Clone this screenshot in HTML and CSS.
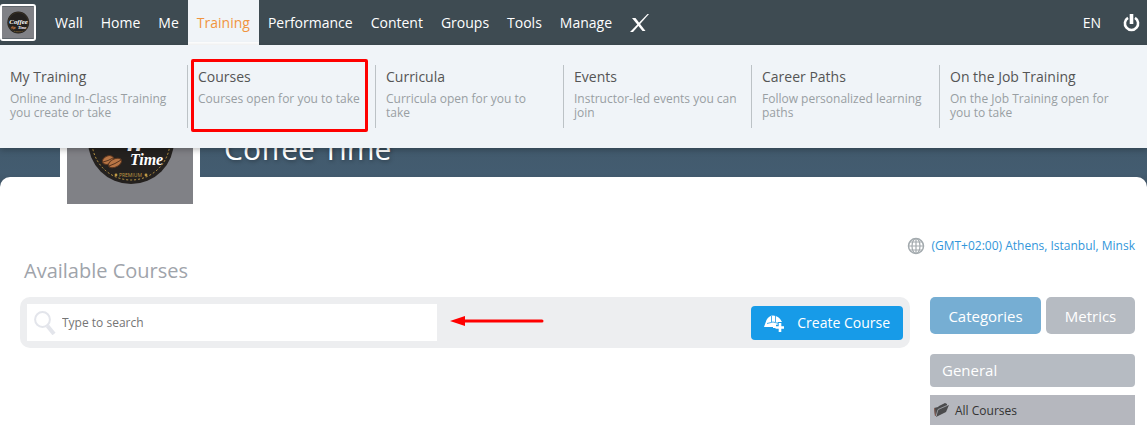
FILE: index.html
```html
<!DOCTYPE html>
<html lang="en">
<head>
<meta charset="utf-8">
<meta name="viewport" content="width=device-width, initial-scale=1">
<title>Available Courses</title>
<link rel="stylesheet" href="styles.css">
</head>
<body>
<svg class="defs" aria-hidden="true">
  <symbol id="coffee-badge" viewBox="0 0 126 126">
    <rect width="126" height="126" fill="#808186"/>
    <circle cx="64" cy="63" r="43" fill="#24211f"/>
    <circle cx="64" cy="63" r="39" fill="none" stroke="#c09a45" stroke-width="1" stroke-dasharray="2 2"/>
    <g fill="#b87545" stroke="#59351f" stroke-width="1">
      <ellipse cx="41" cy="82" rx="6" ry="4" transform="rotate(-25 41 82)"/>
      <ellipse cx="48" cy="85" rx="7" ry="4" transform="rotate(-25 48 85)"/>
      <path d="M36 84q5-1 10-4M42 88q6-2 12-6" fill="none"/>
    </g>
    <text class="badge-script" x="29" y="67" font-size="27">Coffee</text>
    <text class="badge-script" x="63" y="87" font-size="16">Time</text>
    <text class="badge-small" x="52" y="99" font-size="5">PREMIUM</text>
    <circle cx="49" cy="97" r="1.400" fill="#c09a45"/>
    <circle cx="79" cy="97" r="1.400" fill="#c09a45"/>
  </symbol>
</svg>
<header class="topbar">
  <a class="topbar-logo" href="#" aria-label="Coffee Time"><svg><use href="#coffee-badge"/></svg></a>
  <nav class="nav" aria-label="Main">
    <a href="#">Wall</a>
    <a href="#">Home</a>
    <a href="#">Me</a>
    <a href="#" class="active">Training</a>
    <a href="#">Performance</a>
    <a href="#">Content</a>
    <a href="#">Groups</a>
    <a href="#">Tools</a>
    <a href="#">Manage</a>
    <a href="#" aria-label="X"><svg class="icon-x" viewBox="0 0 19 18"><path d="M2 4h3.500l10 13h-3z" fill="#fff"/><path d="M17.500 0H19L3 18H0z" fill="#fff"/></svg></a>
  </nav>
  <a class="topbar-link" href="#">EN</a>
  <button class="power" type="button" aria-label="Log out"><svg viewBox="0 0 16 18"><path d="M4.500 3.800A6.600 6.600 0 1 0 11.500 3.800" fill="none" stroke="#fff" stroke-width="2.600"/><path d="M8 0v10" stroke="#fff" stroke-width="3.600"/></svg></button>
  <div class="submenu">
    <a href="#"><strong>My Training</strong><span>Online and In-Class Training you create or take</span></a>
    <a href="#" class="marked"><strong>Courses</strong><span>Courses open for you to take</span></a>
    <a href="#"><strong>Curricula</strong><span>Curricula open for you to take</span></a>
    <a href="#"><strong>Events</strong><span>Instructor-led events you can join</span></a>
    <a href="#"><strong>Career Paths</strong><span>Follow personalized learning paths</span></a>
    <a href="#"><strong>On the Job Training</strong><span>On the Job Training open for you to take</span></a>
  </div>
</header>
<section class="banner">
  <div class="avatar"><svg><use href="#coffee-badge"/></svg></div>
  <h1>Coffee Time</h1>
</section>
<main class="page">
  <div class="timezone">
    <svg viewBox="0 0 18 18" fill="none" stroke="#a3aaae" stroke-width="1.200"><circle cx="9" cy="9" r="7.500" stroke-width="1.500"/><ellipse cx="9" cy="9" rx="4" ry="7.500"/><path d="M9 1v16M1 9h16M2.500 5h13M2.500 13h13"/></svg>
    <a href="#">(GMT+02:00) Athens, Istanbul, Minsk</a>
  </div>
  <h2>Available Courses</h2>
  <div class="columns">
    <div class="toolbar">
      <label class="search">
        <svg viewBox="0 0 22 24" fill="none" stroke="#e3e5eb"><circle cx="8.500" cy="8.500" r="7.400" stroke-width="2"/><path d="M13.500 15l6.500 8" stroke-width="4"/></svg>
        <input type="text" placeholder="Type to search" aria-label="Type to search">
      </label>
      <svg class="arrow" viewBox="0 0 94 10" aria-hidden="true"><path d="M0 5l15-5v10z" fill="#f00"/><path d="M14 5h78" stroke="#f00" stroke-width="3" stroke-linecap="round"/></svg>
      <button class="create" type="button">
        <svg viewBox="0 0 20 18"><path d="M0 13l2.500-7Q5 1.500 9 1.500q6 0 9 6.500v4h-4v2H9v-1z" fill="#fff"/><path d="M7.500 2v6M11.500 2v6M3 9.500q6-3 12 0" fill="none" stroke="#179be8" stroke-width=".8"/><path d="M16 8v9M12 13h8" stroke="#179be8" stroke-width="4.500"/><path d="M16 9v9M11.500 13.500h8.500" stroke="#fff" stroke-width="2.600"/></svg>
        Create Course
      </button>
    </div>
    <aside class="sidebar">
      <div class="tabs">
        <button type="button" class="tab tab-active">Categories</button>
        <button type="button" class="tab">Metrics</button>
      </div>
      <h3>General</h3>
      <a class="category" href="#"><svg viewBox="0 0 15 14"><path d="M0 5l4-1 1-1 6-3 2 1 0 2-8 4-3 6H1z" fill="#4b4b4d"/><path d="M4 7l11-5-3 7-10 5z" fill="#4b4b4d"/><path d="M2 13L4 6.500l9-4" fill="none" stroke="#b5b7be" stroke-width=".7"/><path d="M.5 5l1 8" stroke="#8b6258"/></svg>All Courses</a>
    </aside>
  </div>
</main>
</body>
</html>
```
FILE: styles.css
```css
*, *::before, *::after { box-sizing: border-box; }
body { margin: 0; background: #fff; font-family: "Open Sans", "Noto Sans", sans-serif; font-size: 14px; color: #555; }
a { text-decoration: none; color: inherit; }
button { border: 0; font: inherit; color: #fff; cursor: pointer; }
svg { display: block; flex: none; }
h1, h2, h3 { margin: 0; font-weight: 400; }
.defs { position: absolute; width: 0; height: 0; }
.badge-script { font-family: "Liberation Serif", serif; font-weight: 700; font-style: italic; fill: #fff; }
.badge-small { font-family: "Open Sans", sans-serif; fill: #c09a45; }

.topbar { position: relative; z-index: 2; display: flex; align-items: center; height: 45px; padding-right: 7px; background: #3e4b52; color: #fff; }
.topbar-logo { width: 36px; height: 37px; margin-right: 10px; border: 2px solid #fff; border-radius: 3px; overflow: hidden; }
.topbar-logo svg { width: 32px; height: 33px; }
.nav { display: flex; flex: 1; align-self: stretch; }
.nav a { display: flex; align-items: center; padding: 0 9px; }
.nav .active { background: #f0f4f8; color: #f0943f; border-bottom: 3px solid #fff; padding-top: 3px; }
.icon-x { width: 19px; height: 18px; }
.power { margin-left: 22px; padding: 0; background: none; }
.power svg { width: 17px; height: 18px; }

.submenu { position: absolute; top: 100%; left: 0; right: 0; display: flex; padding: 20px 0; background: #f0f4f8; box-shadow: 0 2px 6px rgba(0, 0, 0, .25); }
.submenu a { position: relative; width: 188px; height: 63px; padding: 2px 13px 0 10px; border-right: 1px solid #bcc2c6; }
.submenu a:last-child { border-right: 0; }
.submenu strong { display: block; font-weight: 400; line-height: 20px; color: #555; }
.submenu span { display: block; margin-top: 5px; font-size: 12px; line-height: 14px; color: #999fa3; }
.submenu .marked::after { content: ""; position: absolute; top: -6px; left: 3px; width: 177px; height: 73px; border: 3px solid #f00; border-radius: 2px; }

.banner { display: flex; align-items: flex-end; gap: 24px; height: 142px; padding: 0 60px 10px; background: linear-gradient(#3e5260, #435c70 90%, #3f5364); }
.avatar { position: relative; z-index: 1; margin-bottom: -34px; padding: 7px; background: #fff; }
.avatar svg { width: 126px; height: 126px; }
.banner h1 { padding-bottom: 8px; font-size: 30px; line-height: 40px; color: #fff; text-shadow: 1px 1px 4px rgba(0, 0, 0, .4); }

.page { margin-top: -10px; padding: 59px 12px 4px 20px; background: #fff; border-radius: 10px 10px 0 0; }
.timezone { display: flex; justify-content: flex-end; align-items: center; gap: 6px; font-size: 12px; line-height: 20px; color: #3296da; }
.timezone svg { width: 18px; height: 18px; }
h2 { padding: 0 4px; font-size: 20px; line-height: 30px; color: #9fa4ab; }
.columns { display: flex; align-items: flex-start; gap: 20px; margin-top: 11px; }
.toolbar { display: flex; flex: 1; align-items: center; padding: 7px; background: #edeef0; border-radius: 10px; }
.search { display: flex; flex: 0 1 410px; align-items: center; gap: 6px; height: 37px; padding: 0 7px; background: #fff; }
.search svg { width: 22px; height: 24px; }
.search input { flex: 1; min-width: 0; padding: 0; border: 0; outline: 0; background: none; font: 12px "Open Sans", sans-serif; color: #666; }
.search input::placeholder { color: #757575; }
.arrow { width: 94px; height: 10px; margin: 0 0 4px 13px; }
.create { display: flex; align-items: center; gap: 13px; height: 34px; margin-left: auto; padding: 0 13px; background: #179be8; border-radius: 4px; }
.create svg { width: 20px; height: 18px; }
.sidebar { width: 205px; }
.tabs { display: flex; gap: 5px; }
.tab { flex: 89; height: 37px; padding: 0; background: #b6bbc2; border-radius: 5px; font-size: 15px; }
.tab-active { flex: 111; background: #76aed3; }
h3 { margin-top: 20px; padding: 0 12px; background: #b6bbc2; border-radius: 4px; font-size: 15px; line-height: 33px; color: #fff; }
.category { display: flex; align-items: center; gap: 6px; height: 30px; margin-top: 8px; padding: 0 4px; background: #b5b7be; font-size: 12px; color: #333; }
.category svg { width: 15px; height: 14px; }
```
